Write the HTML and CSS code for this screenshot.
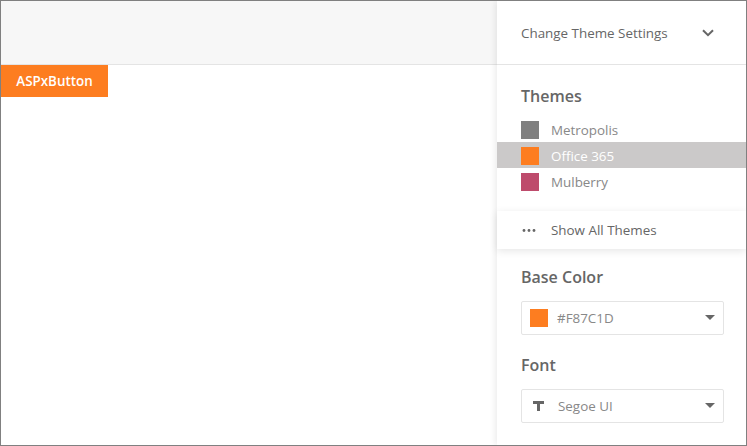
FILE: index.html
```html
<!DOCTYPE html>
<html lang="en">
<head>
<meta charset="utf-8">
<title>Theme Settings</title>
<link rel="stylesheet" href="styles.css">
</head>
<body>
<div class="window">
  <main class="main">
    <div class="toolbar"></div>
    <button class="btn">ASPxButton</button>
  </main>
  <aside class="panel">
    <div class="panel-head">
      <span>Change Theme Settings</span>
      <svg class="chev" width="12" height="8" viewBox="0 0 12 8"><path d="M1 1.2l5 5 5-5" fill="none" stroke="#666" stroke-width="2"/></svg>
    </div>
    <h2 class="title title-themes">Themes</h2>
    <ul class="themes">
      <li class="theme"><span class="swatch s-metro"></span>Metropolis</li>
      <li class="theme active"><span class="swatch s-office"></span>Office 365</li>
      <li class="theme"><span class="swatch s-mul"></span>Mulberry</li>
    </ul>
    <div class="show-all">
      <svg class="dots" width="14" height="3" viewBox="0 0 14 3"><circle cx="2" cy="1.5" r="1.4"/><circle cx="7" cy="1.5" r="1.4"/><circle cx="12" cy="1.5" r="1.4"/></svg>
      <span>Show All Themes</span>
    </div>
    <h2 class="title title-base">Base Color</h2>
    <div class="select">
      <span class="swatch s-office"></span>
      <span class="value">#F87C1D</span>
      <span class="caret"></span>
    </div>
    <h2 class="title title-font">Font</h2>
    <div class="select">
      <svg class="t-icon" width="11" height="10" viewBox="0 0 11 10"><path d="M0 0h11v3H7v7H4V3H0z" fill="#666"/></svg>
      <span class="value">Segoe UI</span>
      <span class="caret"></span>
    </div>
  </aside>
</div>
</body>
</html>
```
FILE: styles.css
```css
* { box-sizing: border-box; }
html, body { margin: 0; height: 100%; }
body { font-family: "Open Sans", "Noto Sans", sans-serif; background: #fff; overflow: hidden; }
.window { width: 747px; height: 446px; border: 1px solid #808080; display: flex; overflow: hidden; }
.main { flex: 1; display: flex; flex-direction: column; align-items: flex-start; min-width: 0; }
.toolbar { width: 100%; height: 64px; background: #f7f7f7; border-bottom: 1px solid #e4e4e4; }
.btn { width: 107px; height: 32px; border: 0; padding: 0; background: #fd7d20; color: #fff; font: 600 13.4px "Open Sans", sans-serif; }
.panel { width: 249px; flex: none; background: #fff; box-shadow: -2px 0 6px rgba(0,0,0,.08); color: #666; position: relative; }
.panel-head { height: 64px; padding: 0 24px; border-bottom: 1px solid #e4e4e4; display: flex; align-items: center; justify-content: space-between; font-size: 13.4px; }
.chev { margin-right: 8px; }
.title { margin: 0; padding: 0 24px; font-size: 16px; font-weight: 600; line-height: 22px; color: #666; }
.title-themes { margin-top: 20px; }
.themes { list-style: none; margin: 9px 0 0; padding: 0; }
.theme { height: 26px; padding: 2px 24px 0; display: flex; align-items: center; gap: 12px; font-size: 13.4px; color: #888; }
.theme.active { background: #cbc9c9; color: #fff; }
.swatch { width: 18px; height: 18px; flex: none; }
.s-metro { background: #808080; }
.s-office { background: #fd7d20; }
.s-mul { background: #be4b6c; }
.show-all { margin-top: 17px; height: 38px; padding: 0 24px 0 25px; display: flex; align-items: center; gap: 15px; font-size: 13.4px; background: #fff; box-shadow: 0 2px 8px rgba(0,0,0,.1); }
.dots { fill: #666; }
.title-base { margin-top: 17px; }
.title-font { margin-top: 19px; }
.select { margin: 13px 22px 0 24px; height: 34px; border: 1px solid #e4e4e4; border-radius: 2px; padding: 0 8px 0 8px; display: flex; align-items: center; font-size: 13.4px; color: #888; }
.select .swatch { margin-right: 9px; }
.value { flex: 1; }
.t-icon { margin: 0 14px 0 3px; }
.caret { width: 0; height: 0; border-left: 5px solid transparent; border-right: 5px solid transparent; border-top: 5px solid #666; margin-top: -1px; }
```
